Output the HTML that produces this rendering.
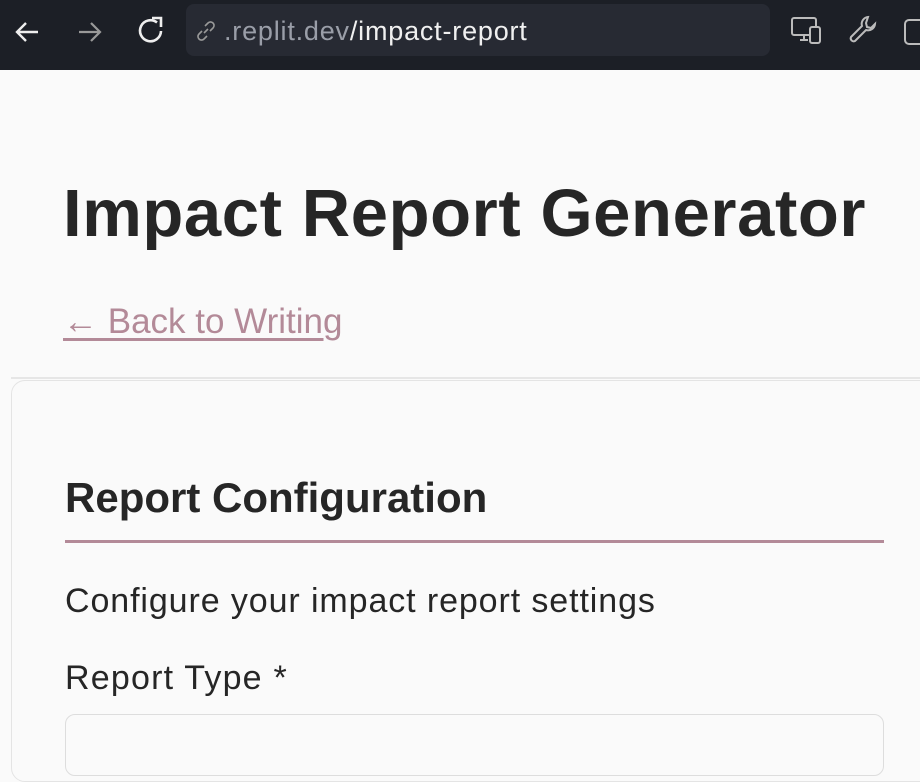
<!DOCTYPE html>
<html><head><style>
body{margin:0;width:920px;height:734px;overflow:hidden;background:#fafafa;font-family:"Liberation Sans",sans-serif;color:#262626;position:relative}
.bar{position:absolute;left:0;top:0;width:920px;height:70px;background:#1c1f26}
.url{position:absolute;left:186px;top:4px;width:584px;height:52px;background:#272a33;border-radius:8px}
.url span{position:absolute;left:38px;top:14px;font-size:27px;line-height:1;color:#f0f0f0;letter-spacing:0.8px}
.url span i{font-style:normal;color:#9a9ea8}
svg{position:absolute}
div,h1,h2{line-height:1}
h1{position:absolute;left:63px;top:180px;margin:0;font-size:67px;font-weight:bold;letter-spacing:0.6px;color:#262626;white-space:nowrap}
.back{position:absolute;left:63px;top:304px;font-size:35px;color:#b38a98;text-decoration:underline;text-underline-offset:5px;white-space:nowrap}
.hr{position:absolute;left:11px;top:377px;width:909px;height:2px;background:#e6e6e6}
.card{position:absolute;left:11px;top:380px;width:940px;height:400px;border:1px solid #e4e4e4;border-radius:14px}
h2{position:absolute;left:65px;top:477px;margin:0;font-size:42px;font-weight:bold;color:#262626;white-space:nowrap}
.ul{position:absolute;left:65px;top:540px;width:819px;height:3px;background:#b38a98}
.p{position:absolute;left:65px;top:584px;font-size:34px;letter-spacing:0.9px;color:#262626;white-space:nowrap}
.lab{position:absolute;left:65px;top:661px;font-size:34px;letter-spacing:1.2px;color:#262626;white-space:nowrap}
.inp{position:absolute;left:65px;top:714px;width:817px;height:60px;border:1px solid #ddd;border-radius:10px;background:#fafafa}
</style></head><body>
<div class="bar">
<svg style="left:12px;top:18px" width="30" height="28" viewBox="0 0 30 28"><path d="M26 14H5M14 5L5 14L14 23" stroke="#eee" stroke-width="2.4" fill="none"/></svg>
<svg style="left:75px;top:18px" width="30" height="28" viewBox="0 0 30 28"><path d="M4 14H25M16 5L25 14L16 23" stroke="#999" stroke-width="2.2" fill="none"/></svg>
<svg style="left:134px;top:14px" width="34" height="34" viewBox="0 0 34 34"><path d="M27 17A10.5 10.5 0 1 1 23 8.5" stroke="#eee" stroke-width="2.6" fill="none"/><path d="M18 4H27V13" stroke="#eee" stroke-width="2.6" fill="none"/></svg>
<div class="url"><svg style="left:8px;top:15px" width="24" height="24" viewBox="0 0 24 24"><path d="M10 14L14 10M8 12L5 15a3.5 3.5 0 0 0 5 5l3-3M16 12l3-3a3.5 3.5 0 0 0-5-5l-3 3" stroke="#999" stroke-width="1.6" fill="none"/></svg><span><i>.replit.dev</i>/impact-report</span></div>
<svg style="left:790px;top:16px" width="34" height="30" viewBox="0 0 34 30"><rect x="2" y="2" width="24" height="17" rx="2" stroke="#bbb" stroke-width="2" fill="none"/><path d="M10 24H18M14 19V24" stroke="#bbb" stroke-width="2"/><rect x="20" y="11" width="10" height="16" rx="2" stroke="#bbb" stroke-width="2" fill="#1c1f26"/></svg>
<svg style="left:848px;top:14px" width="32" height="34" viewBox="0 0 32 34"><path d="M20 3a7 7 0 0 0-6 9L3 23a3 3 0 0 0 4 4l11-11a7 7 0 0 0 9-6l-4 4-4-1-1-4z" stroke="#bbb" stroke-width="2" fill="none"/></svg>
<svg style="left:903px;top:18px" width="17" height="30" viewBox="0 0 17 30"><rect x="2" y="2" width="24" height="24" rx="4" stroke="#bbb" stroke-width="2" fill="none"/></svg>
</div>
<h1>Impact Report Generator</h1>
<div class="back">← Back to Writing</div>
<div class="hr"></div>
<div class="card"></div>
<h2>Report Configuration</h2>
<div class="ul"></div>
<div class="p">Configure your impact report settings</div>
<div class="lab">Report Type *</div>
<div class="inp"></div>
</body></html>
